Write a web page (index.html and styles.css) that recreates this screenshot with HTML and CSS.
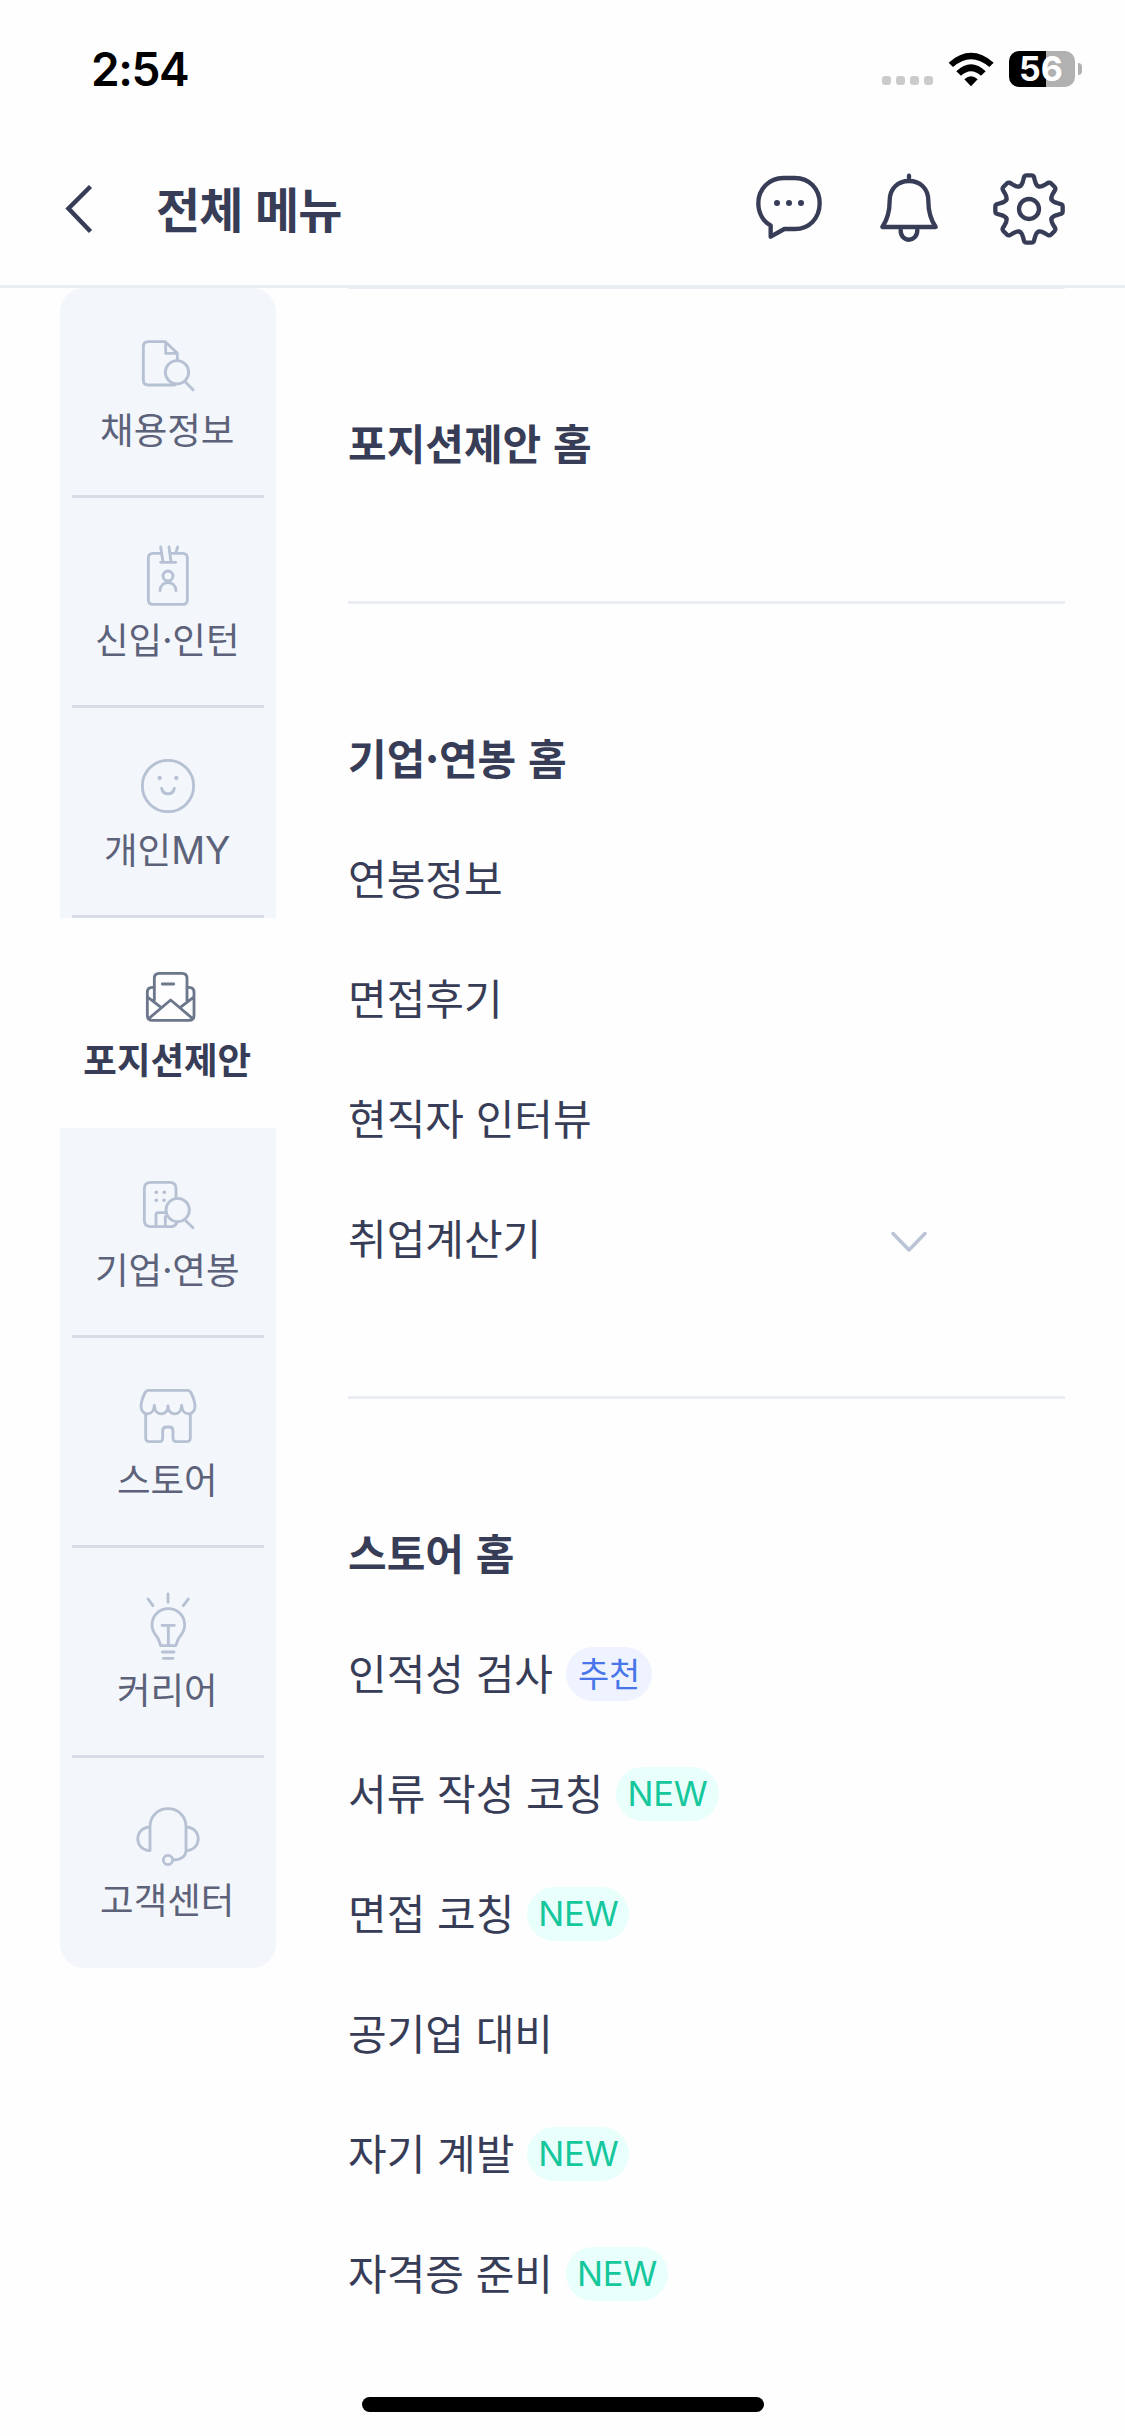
FILE: index.html
```html
<!DOCTYPE html>
<html lang="ko">
<head>
<meta charset="utf-8">
<title>전체 메뉴</title>
<link rel="stylesheet" href="styles.css">
</head>
<body>
<div class="screen">
  <div class="status">
    <span class="time">2:54</span>
    <div class="status-icons">
      <div class="signal"><i></i><i></i><i></i><i></i></div>
      <svg class="wifi" viewBox="744 153 138 104">
        <path d="M746 185Q813 126 881 185L868 198Q813 151 759 198Z"/>
        <path d="M769 211Q813 169 857 211L843 224Q813 197 783 224Z"/>
        <path d="M793 235Q813 216 833 235L813 256Z"/>
      </svg>
      <div class="battery"><span>56</span></div>
      <div class="battery-tip"></div>
    </div>
  </div>

  <header class="header">
    <svg class="back" viewBox="0 0 28 50"><path d="M25.5 2.5L3.5 24.5L25.5 47.5"/></svg>
    <h1 class="title">전체 메뉴</h1>
    <div class="actions">
      <svg class="action" viewBox="159 522 216 216">
        <path d="M250 537H285C328 537 359 570 359 613C359 657 328 690 285 690H253L212 713V679C190 668 175 643 175 613C175 570 208 537 250 537Z"/>
        <g class="solid"><circle cx="231" cy="612" r="9"/><circle cx="267" cy="612" r="9"/><circle cx="303" cy="612" r="9"/></g>
      </svg>
      <svg class="action" viewBox="519 522 216 216">
        <path d="M627 530V545M547 684C562 662 569 640 569 605C569 568 594 546 627 546C660 546 685 568 685 605C685 640 692 662 707 684ZM602 693C601 732 652 732 652 693"/>
      </svg>
      <svg class="action" viewBox="879 522 216 216">
        <defs><path id="tooth" d="M-28-68C-20.500-71-19-80-17-88C-15-97-14-101-8-101H8C14-101 15-97 17-88C19-80 20.500-71 28-68"/></defs>
        <g transform="translate(987 630)">
          <use href="#tooth"/>
          <use href="#tooth" transform="rotate(45)"/>
          <use href="#tooth" transform="rotate(90)"/>
          <use href="#tooth" transform="rotate(135)"/>
          <use href="#tooth" transform="rotate(180)"/>
          <use href="#tooth" transform="rotate(225)"/>
          <use href="#tooth" transform="rotate(270)"/>
          <use href="#tooth" transform="rotate(315)"/>
          <circle r="30"/>
        </g>
      </svg>
    </div>
  </header>

  <main class="main">
    <nav class="side">
      <a class="tab">
        <svg viewBox="246 150 216 216"><path d="M374 315H295Q280 315 280 300V200Q280 185 295 185H346L382 220V240M347 187V220H381M407 307L429 329"/><circle cx="381" cy="277" r="35"/></svg>
        <span>채용정보</span>
      </a>
      <a class="tab">
        <svg viewBox="246 780 216 216"><path d="M333 820H309Q295 820 295 834V959Q295 973 309 973H398Q412 973 412 959V834Q412 820 398 820H364M332 801L339 846M357 801L363 846M332 847H377M383 801L378 818M330 932C332 900 376 900 378 932"/><circle cx="354" cy="888" r="15"/></svg>
        <span>신입·인턴</span>
      </a>
      <a class="tab">
        <svg viewBox="246 330 216 216"><circle cx="354" cy="438" r="77"/><path d="M335 445C340 467 368 467 373 445"/><g class="solid"><circle cx="329" cy="414" r="6.500"/><circle cx="379" cy="414" r="6.500"/></g></svg>
        <span>개인<b class="latin">MY</b></span>
      </a>
      <a class="tab selected">
        <svg viewBox="246 960 216 216"><path d="M313 1082V1015Q313 1000 328 1000H396Q411 1000 411 1015V1082M312 1042H307Q292 1042 292 1057V1126Q292 1141 307 1141H417Q432 1141 432 1126V1057Q432 1042 417 1042H412M337 1032H371M294 1072L333 1102M430 1072L391 1102M297 1135L362 1080L427 1135"/></svg>
        <span>포지션제안</span>
      </a>
      <a class="tab">
        <svg viewBox="246 150 216 216"><path d="M378 233V206Q378 187 359 187H302Q283 187 283 206V301Q283 320 302 320H362Q373 320 380 310M318 319V285Q318 278 325 278H345M346 290V319M407 302L429 323"/><circle cx="383" cy="270" r="35"/><g class="solid"><circle cx="319" cy="217" r="5.500"/><circle cx="343" cy="217" r="5.500"/><circle cx="319" cy="241" r="5.500"/><circle cx="342" cy="241" r="5.500"/></g></svg>
        <span>기업·연봉</span>
      </a>
      <a class="tab">
        <svg viewBox="246 780 216 216"><path d="M296 811H412Q420 811 424 820Q435 844 435 859C435 889 396 890 395 856C394 890 354 890 354 858C354 890 314 890 313 856C312 890 273 889 273 859Q273 844 284 820Q288 811 296 811ZM287 882V953Q287 965 299 965H328Q338 965 338 955V933Q338 921 350 921H358Q369 921 369 933V955Q369 965 379 965H409Q421 965 421 953V882"/></svg>
        <span>스토어</span>
      </a>
      <a class="tab">
        <svg viewBox="246 180 216 216"><path d="M332 347H377C382 337 382 327 391 318C398 309 404 300 404 285C404 257 382 236 355 236C328 236 306 257 306 285C306 300 312 309 319 318C328 327 328 337 332 347ZM336 286H373M355 288V345M354 192V217M294 207L309 227M415 207L400 227M337 366H372M340 385H369"/></svg>
        <span>커리어</span>
      </a>
      <a class="tab">
        <svg viewBox="246 810 216 216"><path d="M300 962V890C300 858 324 836 354 836C384 836 408 858 408 890V963M300 891C251 893 251 960 300 962M408 891C457 893 457 960 408 962M408 963Q406 988 371 990"/><circle cx="354" cy="990" r="14"/></svg>
        <span>고객센터</span>
      </a>
    </nav>

    <div class="content">
      <section class="group">
        <h2 class="row">포지션제안 홈</h2>
      </section>
      <section class="group">
        <h2 class="row">기업·연봉 홈</h2>
        <a class="row">연봉정보</a>
        <a class="row">면접후기</a>
        <a class="row">현직자 인터뷰</a>
        <a class="row expandable">취업계산기<svg class="chevron" viewBox="0 0 36 20"><path d="M2 1.500L18 18L34 1.500"/></svg></a>
      </section>
      <section class="group">
        <h2 class="row">스토어 홈</h2>
        <a class="row">인적성 검사<span class="badge pick">추천</span></a>
        <a class="row">서류 작성 코칭<span class="badge">NEW</span></a>
        <a class="row">면접 코칭<span class="badge">NEW</span></a>
        <a class="row">공기업 대비</a>
        <a class="row">자기 계발<span class="badge">NEW</span></a>
        <a class="row">자격증 준비<span class="badge">NEW</span></a>
      </section>
    </div>
  </main>
  <div class="home-bar"></div>
</div>
</body>
</html>
```
FILE: styles.css
```css
* { box-sizing: border-box; }

body {
  margin: 0;
  background: #fefefe;
  color: #383d57;
  font-family: "Noto Sans CJK KR", sans-serif;
}

.screen {
  position: relative;
  width: 1125px;
  height: 2436px;
  overflow: hidden;
}

svg {
  display: block;
  fill: none;
  stroke: currentColor;
  stroke-linecap: round;
  stroke-linejoin: round;
}

.solid { fill: currentColor; stroke: none; }

/* Status bar */
.status {
  display: flex;
  justify-content: space-between;
  height: 138px;
  padding: 0 43px 0 91px;
  color: #000;
  font-family: Inter, sans-serif;
}

.time {
  font-size: 46px;
  font-weight: 600;
  letter-spacing: -1.4px;
  line-height: 56px;
  margin-top: 41px;
}

.status-icons {
  display: flex;
  align-items: center;
  height: 36px;
  margin-top: 51px;
}

.signal { display: flex; gap: 5px; margin: 23px 15px 0 0; }
.signal i { width: 9px; height: 9px; border-radius: 3px; background: #cbcbcb; }

.wifi { width: 46px; height: 34.7px; margin-right: 15px; fill: #000; stroke: none; }

.battery {
  width: 66px;
  height: 36px;
  padding-right: 2px;
  border-radius: 10px;
  background: linear-gradient(90deg, #000 37px, #b1b1b1 37px);
  color: #fff;
  font-size: 34px;
  font-weight: 700;
  line-height: 36px;
  text-align: center;
}

.battery-tip { width: 4px; height: 12px; margin-left: 3px; border-radius: 0 4px 4px 0; background: #b1b1b1; }

/* Header */
.header {
  display: flex;
  align-items: center;
  height: 150px;
  padding: 0 60px 6px 65px;
  border-bottom: 3px solid #ebedf5;
}

.back { width: 28px; height: 50px; stroke-width: 4.5; stroke-linecap: butt; stroke-linejoin: miter; }

.title {
  margin: -4px auto 0 63px;
  font-size: 48px;
  font-weight: 700;
  letter-spacing: -0.9px;
  line-height: 72px;
}

.actions { display: flex; gap: 48px; }
.action { width: 72px; height: 72px; stroke-width: 13; }

/* Menu body */
.main { display: flex; padding: 0 60px; }

.side {
  width: 216px;
  height: 1680px;
  border-radius: 24px;
  background: #f3f6fa;
  overflow: hidden;
}

.tab {
  display: flex;
  flex-direction: column;
  align-items: center;
  width: 192px;
  height: 210px;
  margin: 0 12px;
  padding-top: 42px;
  border-bottom: 3px solid #d8dce6;
  color: #5c6279;
  font-size: 36.5px;
  line-height: 54px;
  white-space: nowrap;
}

.tab:last-child { border-bottom: 0; }
.tab svg { width: 72px; height: 72px; color: #b6c1d4; stroke-width: 8.500; }
.tab span { padding-right: 1.5px; }

.latin {
  font-family: Inter, sans-serif;
  font-weight: 400;
  font-size: 37.5px;
  line-height: 1;
}

.tab.selected {
  width: 216px;
  margin: 0;
  border-bottom: 0;
  background: #fefefe;
  color: #383d57;
  font-weight: 700;
}

.tab.selected svg { color: #6c778c; }

.content { width: 717px; margin: -2px 0 0 72px; }

.group { padding: 92px 0 100px; border-top: 3px solid #ebedf5; }

.row {
  display: flex;
  align-items: center;
  height: 120px;
  margin: 0;
  font-size: 42px;
  font-weight: 400;
  white-space: pre;
}

h2.row { font-weight: 700; }

.expandable { justify-content: space-between; padding-right: 138px; }
.chevron { width: 36px; height: 20px; margin-top: 12px; color: #bac4d5; stroke-width: 3.5; }

.badge {
  height: 54px;
  margin: 6px 0 0 13px;
  padding: 0 11px;
  border-radius: 27px;
  background: #e8fffc;
  color: #16c79c;
  font-family: Inter, sans-serif;
  font-size: 34.5px;
  letter-spacing: -0.2px;
  line-height: 54px;
}

.badge.pick {
  padding: 0 12px;
  background: #eff3ff;
  color: #4876e8;
  font-family: "Noto Sans CJK KR", sans-serif;
  font-size: 34px;
  line-height: 51px;
}

.home-bar {
  position: absolute;
  left: 362px;
  bottom: 24px;
  width: 402px;
  height: 15px;
  border-radius: 8px;
  background: #000;
}
```
